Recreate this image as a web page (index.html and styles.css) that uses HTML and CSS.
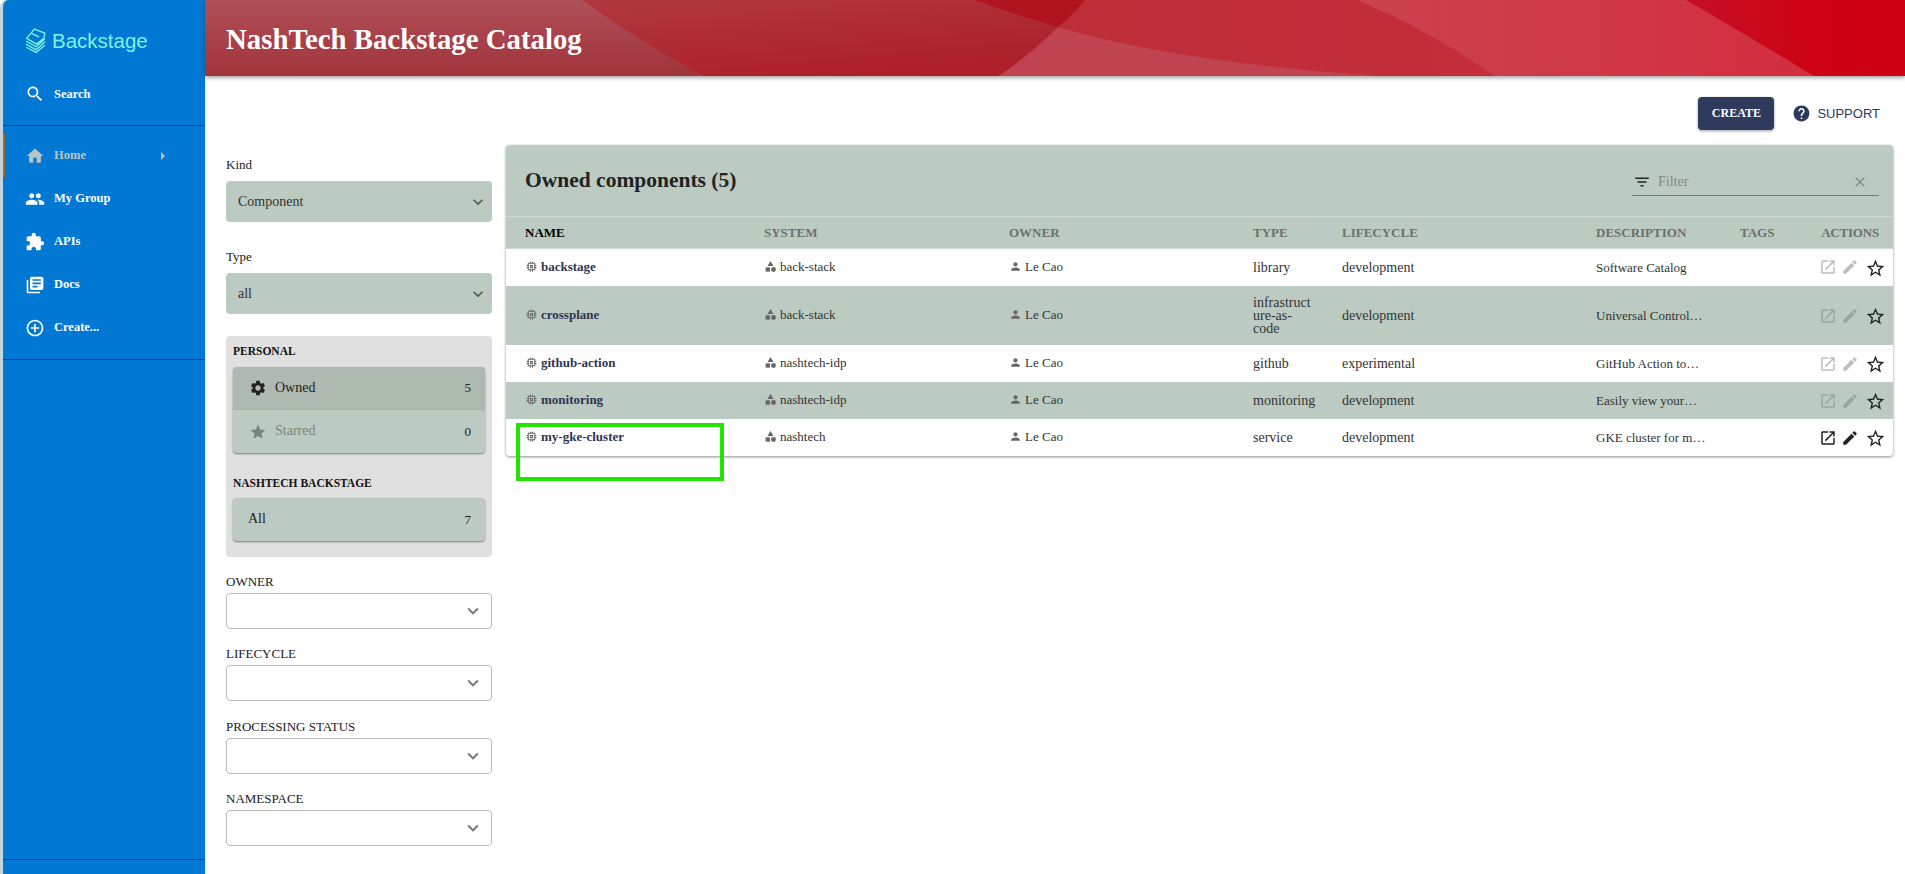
FILE: index.html
```html
<!DOCTYPE html>
<html lang="en">
<head>
    <meta charset="UTF-8">
    <title>NashTech Backstage Catalog</title>
    <link rel="stylesheet" href="styles.css">
</head>
<body>
    <svg class="defs" aria-hidden="true">
        <symbol id="i-search" viewBox="0 0 24 24"><path d="M15.5 14h-.79l-.28-.27C15.41 12.59 16 11.11 16 9.5 16 5.91 13.09 3 9.5 3S3 5.91 3 9.5 5.91 16 9.5 16c1.61 0 3.09-.59 4.23-1.57l.27.28v.79l5 4.99L20.49 19l-4.99-5zm-6 0C7.01 14 5 11.99 5 9.5S7.01 5 9.5 5 14 7.01 14 9.5 11.99 14 9.5 14z"/></symbol>
        <symbol id="i-home" viewBox="0 0 24 24"><path d="M10 20v-6h4v6h5v-8h3L12 3 2 12h3v8z"/></symbol>
        <symbol id="i-group" viewBox="0 0 24 24"><path d="M16 11c1.66 0 2.99-1.34 2.99-3S17.66 5 16 5c-1.66 0-3 1.34-3 3s1.34 3 3 3zm-8 0c1.66 0 2.99-1.34 2.99-3S9.66 5 8 5C6.34 5 5 6.34 5 8s1.34 3 3 3zm0 2c-2.33 0-7 1.17-7 3.5V19h14v-2.5c0-2.33-4.67-3.5-7-3.5zm8 0c-.29 0-.62.02-.97.05 1.16.84 1.97 1.97 1.97 3.45V19h6v-2.5c0-2.33-4.67-3.5-7-3.5z"/></symbol>
        <symbol id="i-ext" viewBox="0 0 24 24"><path d="M20.5 11H19V7c0-1.1-.9-2-2-2h-4V3.5C13 2.12 11.88 1 10.5 1S8 2.12 8 3.5V5H4c-1.1 0-1.99.9-1.99 2v3.8H3.5c1.49 0 2.7 1.21 2.7 2.7s-1.21 2.7-2.7 2.7H2V20c0 1.1.9 2 2 2h3.8v-1.5c0-1.49 1.21-2.7 2.7-2.7 1.49 0 2.7 1.21 2.7 2.7V22H17c1.1 0 2-.9 2-2v-4h1.5c1.38 0 2.5-1.12 2.5-2.5S21.88 11 20.5 11z"/></symbol>
        <symbol id="i-docs" viewBox="0 0 24 24"><path d="M4 6H2v14c0 1.1.9 2 2 2h14v-2H4V6zm16-4H8c-1.1 0-2 .9-2 2v12c0 1.1.9 2 2 2h12c1.1 0 2-.9 2-2V4c0-1.1-.9-2-2-2zm-1 9H9V9h10v2zm-4 4H9v-2h6v2zm4-8H9V5h10v2z"/></symbol>
        <symbol id="i-add" viewBox="0 0 24 24"><path d="M13 7h-2v4H7v2h4v4h2v-4h4v-2h-4V7zm-1-5C6.48 2 2 6.48 2 12s4.48 10 10 10 10-4.48 10-10S17.52 2 12 2zm0 18c-4.41 0-8-3.59-8-8s3.59-8 8-8 8 3.59 8 8-3.59 8-8 8z"/></symbol>
        <symbol id="i-more" viewBox="0 0 24 24"><path d="M16.59 8.59L12 13.17 7.41 8.59 6 10l6 6 6-6z"/></symbol>
        <symbol id="i-help" viewBox="0 0 24 24"><path d="M12 2C6.48 2 2 6.48 2 12s4.48 10 10 10 10-4.48 10-10S17.52 2 12 2zm1 17h-2v-2h2v2zm2.07-7.75l-.9.92C13.45 12.9 13 13.5 13 15h-2v-.5c0-1.1.45-2.1 1.17-2.83l1.24-1.26c.37-.36.59-.86.59-1.41 0-1.1-.9-2-2-2s-2 .9-2 2H8c0-2.21 1.79-4 4-4s4 1.79 4 4c0 .88-.36 1.68-.93 2.25z"/></symbol>
        <symbol id="i-filter" viewBox="0 0 24 24"><path d="M10 18h4v-2h-4v2zM3 6v2h18V6H3zm3 7h12v-2H6v2z"/></symbol>
        <symbol id="i-clear" viewBox="0 0 24 24"><path d="M19 6.41L17.59 5 12 10.59 6.41 5 5 6.41 10.59 12 5 17.59 6.41 19 12 13.41 17.59 19 19 17.59 13.41 12z"/></symbol>
        <symbol id="i-gear" viewBox="0 0 24 24"><path d="M19.14 12.94c.04-.3.06-.61.06-.94 0-.32-.02-.64-.07-.94l2.03-1.58c.18-.14.23-.41.12-.61l-1.92-3.32c-.12-.22-.37-.29-.59-.22l-2.39.96c-.5-.38-1.03-.7-1.62-.94l-.36-2.54c-.04-.24-.24-.41-.48-.41h-3.84c-.24 0-.43.17-.47.41l-.36 2.54c-.59.24-1.13.57-1.62.94l-2.39-.96c-.22-.08-.47 0-.59.22L2.74 8.87c-.12.21-.08.47.12.61l2.03 1.58c-.05.3-.09.63-.09.94s.02.64.07.94l-2.03 1.58c-.18.14-.23.41-.12.61l1.92 3.32c.12.22.37.29.59.22l2.39-.96c.5.38 1.03.7 1.62.94l.36 2.54c.05.24.24.41.48.41h3.84c.24 0 .44-.17.47-.41l.36-2.54c.59-.24 1.13-.56 1.62-.94l2.39.96c.22.08.47 0 .59-.22l1.92-3.32c.12-.22.07-.47-.12-.61l-2.01-1.58zM12 15.6c-1.98 0-3.6-1.62-3.6-3.6s1.62-3.6 3.6-3.6 3.6 1.62 3.6 3.6-1.62 3.6-3.6 3.6z"/></symbol>
        <symbol id="i-star" viewBox="0 0 24 24"><path d="M12 17.27L18.18 21l-1.64-7.03L22 9.24l-7.19-.61L12 2 9.19 8.63 2 9.24l5.46 4.73L5.82 21z"/></symbol>
        <symbol id="i-star-o" viewBox="0 0 24 24"><path d="M22 9.24l-7.19-.62L12 2 9.19 8.63 2 9.24l5.46 4.73L5.82 21 12 17.27 18.18 21l-1.63-7.03L22 9.24zM12 15.4l-3.76 2.27 1-4.28-3.32-2.88 4.38-.38L12 6.1l1.71 4.04 4.38.38-3.32 2.88 1 4.28L12 15.4z"/></symbol>
        <symbol id="i-open" viewBox="0 0 24 24"><path d="M19 19H5V5h7V3H5c-1.11 0-2 .9-2 2v14c0 1.1.89 2 2 2h14c1.1 0 2-.9 2-2v-7h-2v7zM14 3v2h3.59l-9.83 9.83 1.41 1.41L19 6.41V10h2V3h-7z"/></symbol>
        <symbol id="i-edit" viewBox="0 0 24 24"><path d="M3 17.25V21h3.75L17.81 9.94l-3.75-3.75L3 17.25zM20.71 7.04c.39-.39.39-1.02 0-1.41l-2.34-2.34c-.39-.39-1.02-.39-1.41 0l-1.83 1.83 3.75 3.75 1.83-1.83z"/></symbol>
        <symbol id="i-person" viewBox="0 0 24 24"><path d="M12 12c2.21 0 4-1.79 4-4s-1.79-4-4-4-4 1.79-4 4 1.79 4 4 4zm0 2c-2.67 0-8 1.34-8 4v2h16v-2c0-2.66-5.33-4-8-4z"/></symbol>
        <symbol id="i-memory" viewBox="0 0 24 24"><path d="M15 9H9v6h6V9zm-2 4h-2v-2h2v2zm8-2V9h-2V7c0-1.1-.9-2-2-2h-2V3h-2v2h-2V3H9v2H7c-1.1 0-2 .9-2 2v2H3v2h2v2H3v2h2v2c0 1.1.9 2 2 2h2v2h2v-2h2v2h2v-2h2c1.1 0 2-.9 2-2v-2h2v-2h-2v-2h2zm-4 6H7V7h10v10z"/></symbol>
        <symbol id="i-category" viewBox="0 0 24 24"><path d="M12 2l-5.5 9h11z"/><circle cx="17.5" cy="17.5" r="4.5"/><path d="M3 13.5h8v8H3z"/></symbol>
    </svg>

    <div class="page">
        <nav class="sidebar">
            <div class="logo">
                <svg class="logo-mark" viewBox="0 0 20 25">
                    <path class="logo-line" d="M9 1l10 4-1 5-7 5.5L1.5 10zM6.5 5.5l7 3M1 12.5l9.5 5.5L19 10.5M1 15.5l9.5 5.5L19 13.5M1 18.5l9.5 5L19 16.5"/>
                </svg>
                <span>Backstage</span>
            </div>
            <a class="nav-item search-item"><svg class="icon"><use href="#i-search"/></svg>Search</a>
            <div class="nav-group">
                <a class="nav-item active"><svg class="icon"><use href="#i-home"/></svg>Home<span class="nav-arrow"></span></a>
                <a class="nav-item"><svg class="icon"><use href="#i-group"/></svg>My Group</a>
                <a class="nav-item"><svg class="icon"><use href="#i-ext"/></svg>APIs</a>
                <a class="nav-item"><svg class="icon"><use href="#i-docs"/></svg>Docs</a>
                <a class="nav-item"><svg class="icon"><use href="#i-add"/></svg>Create...</a>
            </div>
            <div class="sidebar-foot"></div>
        </nav>

        <div class="main">
            <header class="banner">
                <svg class="banner-art" viewBox="0 0 1700 76" preserveAspectRatio="none">
                    <defs>
                        <linearGradient id="bannerLeft" x1="0" y1="0" x2="0.1" y2="1">
                            <stop offset="0" stop-color="#b04f58"/>
                            <stop offset="1" stop-color="#a1343b"/>
                        </linearGradient>
                        <linearGradient id="bannerDark" x1="0" y1="0" x2="0.6" y2="1">
                            <stop offset="0" stop-color="#b0383f"/>
                            <stop offset="1" stop-color="#ad1f29"/>
                        </linearGradient>
                        <linearGradient id="bannerMid" x1="0" y1="0" x2="1" y2="0">
                            <stop offset="0" stop-color="#bb2e38"/>
                            <stop offset="1" stop-color="#c52d3b"/>
                        </linearGradient>
                        <linearGradient id="bannerLight" x1="0" y1="0" x2="1" y2="0">
                            <stop offset="0" stop-color="#ca434e"/>
                            <stop offset="1" stop-color="#d32d3f"/>
                        </linearGradient>
                        <linearGradient id="bannerEnd" x1="0" y1="0" x2="1" y2="0">
                            <stop offset="0" stop-color="#c50f27"/>
                            <stop offset="0.5" stop-color="#cc0515"/>
                            <stop offset="1" stop-color="#cf0012"/>
                        </linearGradient>
                    </defs>
                    <rect width="1700" height="76" fill="url(#bannerLeft)"/>
                    <path d="M377 0Q435 42 499 76H794Q845 40 880 0z" fill="url(#bannerDark)"/>
                    <path d="M880 0H1153Q1235 36 1289 76H794Q845 40 880 0z" fill="url(#bannerMid)"/>
                    <path d="M770 0H880Q868 15 853 27Q810 15 770 0z" fill="#b0151f"/>
                    <path d="M853 27Q970 62 1175 76H794Q825 55 853 27z" fill="#bf444f"/>
                    <path d="M1153 0H1481Q1550 40 1609 76H1289Q1235 36 1153 0z" fill="url(#bannerLight)"/>
                    <path d="M1481 0H1700V76H1609Q1550 40 1481 0z" fill="url(#bannerEnd)"/>
                </svg>
                <h1 class="banner-title">NashTech Backstage Catalog</h1>
            </header>

            <div class="content">
                <div class="toolbar">
                    <button class="create-btn">CREATE</button>
                    <a class="support"><svg class="icon"><use href="#i-help"/></svg>SUPPORT</a>
                </div>

                <div class="catalog">
                    <aside class="filters">
                        <div class="field top-field">
                            <label>Kind</label>
                            <div class="select filled">Component<svg class="icon"><use href="#i-more"/></svg></div>
                        </div>
                        <div class="field top-field">
                            <label>Type</label>
                            <div class="select filled">all<svg class="icon"><use href="#i-more"/></svg></div>
                        </div>

                        <div class="picker">
                            <div class="picker-title">PERSONAL</div>
                            <div class="picker-card">
                                <div class="picker-row selected"><svg class="icon"><use href="#i-gear"/></svg><span>Owned</span><b>5</b></div>
                                <div class="picker-row dim"><svg class="icon"><use href="#i-star"/></svg><span>Starred</span><b>0</b></div>
                            </div>
                            <div class="picker-title second">NASHTECH BACKSTAGE</div>
                            <div class="picker-card">
                                <div class="picker-row plain"><span>All</span><b>7</b></div>
                            </div>
                        </div>

                        <div class="field">
                            <label>OWNER</label>
                            <div class="select"><svg class="icon"><use href="#i-more"/></svg></div>
                        </div>
                        <div class="field">
                            <label>LIFECYCLE</label>
                            <div class="select"><svg class="icon"><use href="#i-more"/></svg></div>
                        </div>
                        <div class="field">
                            <label>PROCESSING STATUS</label>
                            <div class="select"><svg class="icon"><use href="#i-more"/></svg></div>
                        </div>
                        <div class="field">
                            <label>NAMESPACE</label>
                            <div class="select"><svg class="icon"><use href="#i-more"/></svg></div>
                        </div>
                    </aside>

                    <section class="table-card">
                        <div class="table-head">
                            <h2>Owned components (5)</h2>
                            <div class="search-box">
                                <svg class="icon"><use href="#i-filter"/></svg>
                                <span>Filter</span>
                                <svg class="icon clear"><use href="#i-clear"/></svg>
                            </div>
                        </div>
                        <table>
                            <colgroup>
                                <col class="c-name"><col class="c-system"><col class="c-owner"><col class="c-type">
                                <col class="c-life"><col class="c-desc"><col class="c-tags"><col class="c-actions">
                            </colgroup>
                            <thead>
                                <tr>
                                    <th class="sorted">NAME</th><th>SYSTEM</th><th>OWNER</th><th>TYPE</th>
                                    <th>LIFECYCLE</th><th>DESCRIPTION</th><th>TAGS</th><th class="right">ACTIONS</th>
                                </tr>
                            </thead>
                            <tbody>
                                <tr>
                                    <td><a class="entity strong"><svg class="icon"><use href="#i-memory"/></svg>backstage</a></td>
                                    <td><a class="entity"><svg class="icon"><use href="#i-category"/></svg>back-stack</a></td>
                                    <td><a class="entity"><svg class="icon"><use href="#i-person"/></svg>Le Cao</a></td>
                                    <td class="type">library</td><td>development</td><td class="desc">Software Catalog</td><td></td>
                                    <td class="actions off"><svg class="icon"><use href="#i-open"/></svg><svg class="icon"><use href="#i-edit"/></svg><svg class="icon star"><use href="#i-star-o"/></svg></td>
                                </tr>
                                <tr>
                                    <td><a class="entity strong"><svg class="icon"><use href="#i-memory"/></svg>crossplane</a></td>
                                    <td><a class="entity"><svg class="icon"><use href="#i-category"/></svg>back-stack</a></td>
                                    <td><a class="entity"><svg class="icon"><use href="#i-person"/></svg>Le Cao</a></td>
                                    <td class="type">infrastructure-as-code</td><td>development</td><td class="desc">Universal Control…</td><td></td>
                                    <td class="actions off"><svg class="icon"><use href="#i-open"/></svg><svg class="icon"><use href="#i-edit"/></svg><svg class="icon star"><use href="#i-star-o"/></svg></td>
                                </tr>
                                <tr>
                                    <td><a class="entity strong"><svg class="icon"><use href="#i-memory"/></svg>github-action</a></td>
                                    <td><a class="entity"><svg class="icon"><use href="#i-category"/></svg>nashtech-idp</a></td>
                                    <td><a class="entity"><svg class="icon"><use href="#i-person"/></svg>Le Cao</a></td>
                                    <td class="type">github</td><td>experimental</td><td class="desc">GitHub Action to…</td><td></td>
                                    <td class="actions off"><svg class="icon"><use href="#i-open"/></svg><svg class="icon"><use href="#i-edit"/></svg><svg class="icon star"><use href="#i-star-o"/></svg></td>
                                </tr>
                                <tr>
                                    <td><a class="entity strong"><svg class="icon"><use href="#i-memory"/></svg>monitoring</a></td>
                                    <td><a class="entity"><svg class="icon"><use href="#i-category"/></svg>nashtech-idp</a></td>
                                    <td><a class="entity"><svg class="icon"><use href="#i-person"/></svg>Le Cao</a></td>
                                    <td class="type">monitoring</td><td>development</td><td class="desc">Easily view your…</td><td></td>
                                    <td class="actions off"><svg class="icon"><use href="#i-open"/></svg><svg class="icon"><use href="#i-edit"/></svg><svg class="icon star"><use href="#i-star-o"/></svg></td>
                                </tr>
                                <tr>
                                    <td><a class="entity strong"><svg class="icon"><use href="#i-memory"/></svg>my-gke-cluster</a></td>
                                    <td><a class="entity"><svg class="icon"><use href="#i-category"/></svg>nashtech</a></td>
                                    <td><a class="entity"><svg class="icon"><use href="#i-person"/></svg>Le Cao</a></td>
                                    <td class="type">service</td><td>development</td><td class="desc">GKE cluster for m…</td><td></td>
                                    <td class="actions"><svg class="icon"><use href="#i-open"/></svg><svg class="icon"><use href="#i-edit"/></svg><svg class="icon star"><use href="#i-star-o"/></svg></td>
                                </tr>
                            </tbody>
                        </table>
                        <div class="highlight-box"></div>
                    </section>
                </div>
            </div>
        </div>
    </div>
</body>
</html>
```

FILE: styles.css
```css
* {
    box-sizing: border-box;
}
body {
    margin: 0;
    font-family: "Liberation Serif", "Times New Roman", serif;
    color: #222;
    background-color: #fff;
}
.defs {
    display: none;
}
.icon {
    width: 24px;
    height: 24px;
    fill: currentColor;
    flex-shrink: 0;
}
.page {
    display: flex;
    height: 874px;
    overflow: hidden;
}

/* sidebar */
.sidebar {
    width: 205px;
    flex-shrink: 0;
    display: flex;
    flex-direction: column;
    background-color: #0078d4;
    border-left: 3px solid #c5d3dc;
    border-top-left-radius: 8px;
    color: #fff;
}
.logo {
    height: 76px;
    display: flex;
    align-items: center;
    padding: 5px 0 0 22px;
    color: #7df3e1;
    font-family: "Liberation Sans", Arial, sans-serif;
    font-size: 20.5px;
}
.logo-mark {
    width: 21px;
    height: 26px;
    margin-right: 6px;
}
.logo-line {
    fill: none;
    stroke: #7df3e1;
    stroke-width: 1.3;
}
.nav-item {
    height: 43px;
    display: flex;
    align-items: center;
    padding-left: 22px;
    font-size: 12.5px;
    font-weight: bold;
}
.nav-item .icon {
    width: 20px;
    height: 20px;
    margin-right: 9px;
}
.search-item {
    height: 49px;
    padding-bottom: 13px;
}
.nav-group {
    border-top: 1px solid #1d3f66;
    border-bottom: 1px solid #1d3f66;
    padding: 8px 0 8px;
    height: 235px;
}
.nav-item.active {
    color: #b5c6c4;
    border-left: 2px solid #9a6f1e;
    padding-left: 20px;
}
.nav-arrow {
    width: 0;
    height: 0;
    margin-left: 75px;
    border-left: 4px solid #b5c6c4;
    border-top: 4px solid transparent;
    border-bottom: 4px solid transparent;
}
.sidebar-foot {
    margin-top: auto;
    height: 15px;
    border-top: 1px solid #1d3f66;
}

/* banner */
.main {
    flex: 1;
    min-width: 0;
}
.banner {
    position: relative;
    height: 76px;
    padding: 21px 0 0 21px;
    background-color: #a1343b;
    box-shadow: 0 2px 4px rgba(0,0,0,0.35);
}
.banner-art {
    position: absolute;
    top: 0;
    left: 0;
    width: 100%;
    height: 100%;
}
.banner-title {
    position: relative;
    margin: 0;
    color: #fff;
    font-size: 28.8px;
    line-height: 36px;
}

/* content */
.content {
    padding: 21px 12px 0 21px;
}
.toolbar {
    display: flex;
    justify-content: flex-end;
    align-items: center;
    height: 33px;
    padding-right: 13px;
}
.create-btn {
    width: 76px;
    height: 33px;
    padding: 0;
    border: none;
    border-radius: 4px;
    background-color: #2e3a5c;
    color: #fff;
    font-family: inherit;
    font-size: 12px;
    font-weight: bold;
    box-shadow: 0 1px 3px rgba(0,0,0,0.4);
}
.support {
    display: flex;
    align-items: center;
    margin-left: 18px;
    color: #2e3a5c;
    font-family: "Liberation Sans", Arial, sans-serif;
    font-size: 13px;
}
.support .icon {
    width: 19px;
    height: 19px;
    margin-right: 6px;
}
.catalog {
    display: flex;
    gap: 14px;
    margin-top: 15px;
}

/* filters */
.filters {
    width: 266px;
    flex-shrink: 0;
    padding-top: 13px;
}
.field {
    margin-bottom: 18.33px;
}
.field label {
    display: block;
    height: 14px;
    margin-bottom: 4px;
    font-size: 13px;
    line-height: 14px;
    color: #222;
}
.top-field {
    margin-bottom: 28px;
}
.top-field label {
    margin-bottom: 9px;
}
.top-field:nth-child(2) {
    margin-bottom: 22px;
}
.select {
    display: flex;
    align-items: center;
    justify-content: flex-end;
    height: 36px;
    padding: 0 7px;
    border: 1px solid #bbb;
    border-radius: 4px;
    background-color: #fff;
    color: #777;
}
.select .icon {
    width: 22px;
    height: 22px;
}
.select.filled {
    height: 41px;
    justify-content: space-between;
    padding: 0 3px 0 12px;
    border: none;
    background-color: #bccbc1;
    color: #333;
    font-size: 14px;
}
.select.filled .icon {
    color: #555;
    width: 20px;
    height: 20px;
    margin-right: 1px;
}
.picker {
    height: 221px;
    margin-bottom: 18px;
    padding: 8px 7px;
    border-radius: 4px;
    background-color: #e0e0e0;
}
.picker-title {
    height: 14px;
    margin-bottom: 9px;
    font-size: 11.5px;
    font-weight: bold;
    line-height: 14px;
    color: #111;
}
.picker-title.second {
    margin-top: 23px;
    margin-bottom: 8px;
}
.picker-card {
    border-radius: 4px;
    background-color: #bccbc1;
    overflow: hidden;
    box-shadow: 0 1px 2px rgba(0,0,0,0.45);
}
.picker-row {
    display: flex;
    align-items: center;
    height: 43px;
    padding: 0 14px 0 16px;
    font-size: 14px;
}
.picker-row .icon {
    width: 18px;
    height: 18px;
    margin-right: 8px;
}
.picker-row span {
    flex: 1;
    padding-bottom: 1px;
}
.picker-row b {
    font-weight: normal;
    font-size: 13px;
}
.picker-row.selected {
    background-color: #aeb9b0;
    border-bottom: 1px solid #a6b3aa;
}
.picker-row.dim .icon,
.picker-row.dim span {
    color: #7a8580;
}
.picker-row.plain {
    padding-left: 15px;
}

/* table */
.table-card {
    position: relative;
    width: 1387px;
    align-self: flex-start;
    border-radius: 4px;
    background-color: #fff;
    box-shadow: 0 1px 3px rgba(0,0,0,0.45);
}
.table-head {
    height: 72px;
    display: flex;
    align-items: flex-start;
    justify-content: space-between;
    padding: 22px 14px 0 19px;
    border-radius: 4px 4px 0 0;
    background-color: #bccbc1;
    border-bottom: 1px solid #cfdad3;
}
.table-head h2 {
    margin: 0;
    font-size: 21.5px;
    line-height: 26px;
    color: #222;
}
.search-box {
    display: flex;
    align-items: center;
    width: 247px;
    height: 28px;
    margin-top: 1px;
    padding: 0 11px 0 1px;
    border-bottom: 1px solid #6e7a72;
    font-size: 14px;
    color: #7d8a82;
}
.search-box .icon {
    width: 18px;
    height: 18px;
    color: #222;
    margin-right: 7px;
}
.search-box span {
    flex: 1;
}
.search-box .clear {
    width: 16px;
    height: 16px;
    color: #7d8a82;
    margin-right: 0;
}
table {
    width: 100%;
    table-layout: fixed;
    border-collapse: collapse;
    font-size: 14px;
    line-height: 13px;
}
.c-name { width: 242px; }
.c-system { width: 245px; }
.c-owner { width: 244px; }
.c-type { width: 89px; }
.c-life { width: 254px; }
.c-desc { width: 144px; }
.c-tags { width: 82px; }
.c-actions { width: 87px; }
th {
    height: 31px;
    padding: 0 16px;
    text-align: left;
    font-size: 13px;
    font-weight: bold;
    color: #6b716d;
    background-color: #bccbc1;
    border-bottom: 1px solid #cfdad3;
    white-space: nowrap;
}
th:first-child,
td:first-child {
    padding-left: 19px;
}
th.sorted {
    color: #000;
}
th.right {
    padding: 0 14px 0 0;
    text-align: right;
    letter-spacing: -0.2px;
}
td {
    height: 37px;
    padding: 10px 16px;
    color: #333;
    overflow-wrap: break-word;
}
tbody tr:first-child td {
    height: 38px;
}
td.type {
    padding-right: 9px;
}
td.desc {
    padding-right: 0;
    font-size: 13px;
    white-space: nowrap;
}
tbody tr:nth-child(even) td {
    background-color: #bccbc1;
}
.entity {
    display: flex;
    align-items: center;
    padding-bottom: 2px;
    white-space: nowrap;
    font-size: 13px;
    color: #333;
}
.entity .icon {
    width: 13px;
    height: 13px;
    margin-right: 3px;
    color: #666;
}
.entity.strong {
    font-weight: bold;
    color: #2f3550;
}
td.actions {
    padding: 0 7px 0 0;
    text-align: right;
    white-space: nowrap;
    color: #222;
}
.actions .icon {
    width: 18px;
    height: 18px;
    margin-left: 4px;
    vertical-align: middle;
}
.actions.off .icon {
    color: #bdbdbd;
}
tbody tr:nth-child(even) .actions.off .icon {
    color: #9aa59d;
}
.actions .icon.star,
.actions.off .icon.star,
tbody tr:nth-child(even) .actions.off .icon.star {
    width: 21px;
    height: 21px;
    margin-left: 6px;
    color: #222;
    position: relative;
    top: 1px;
}
.highlight-box {
    position: absolute;
    left: 10px;
    top: 278px;
    width: 208px;
    height: 58px;
    border: 4px solid #22e600;
}
```
